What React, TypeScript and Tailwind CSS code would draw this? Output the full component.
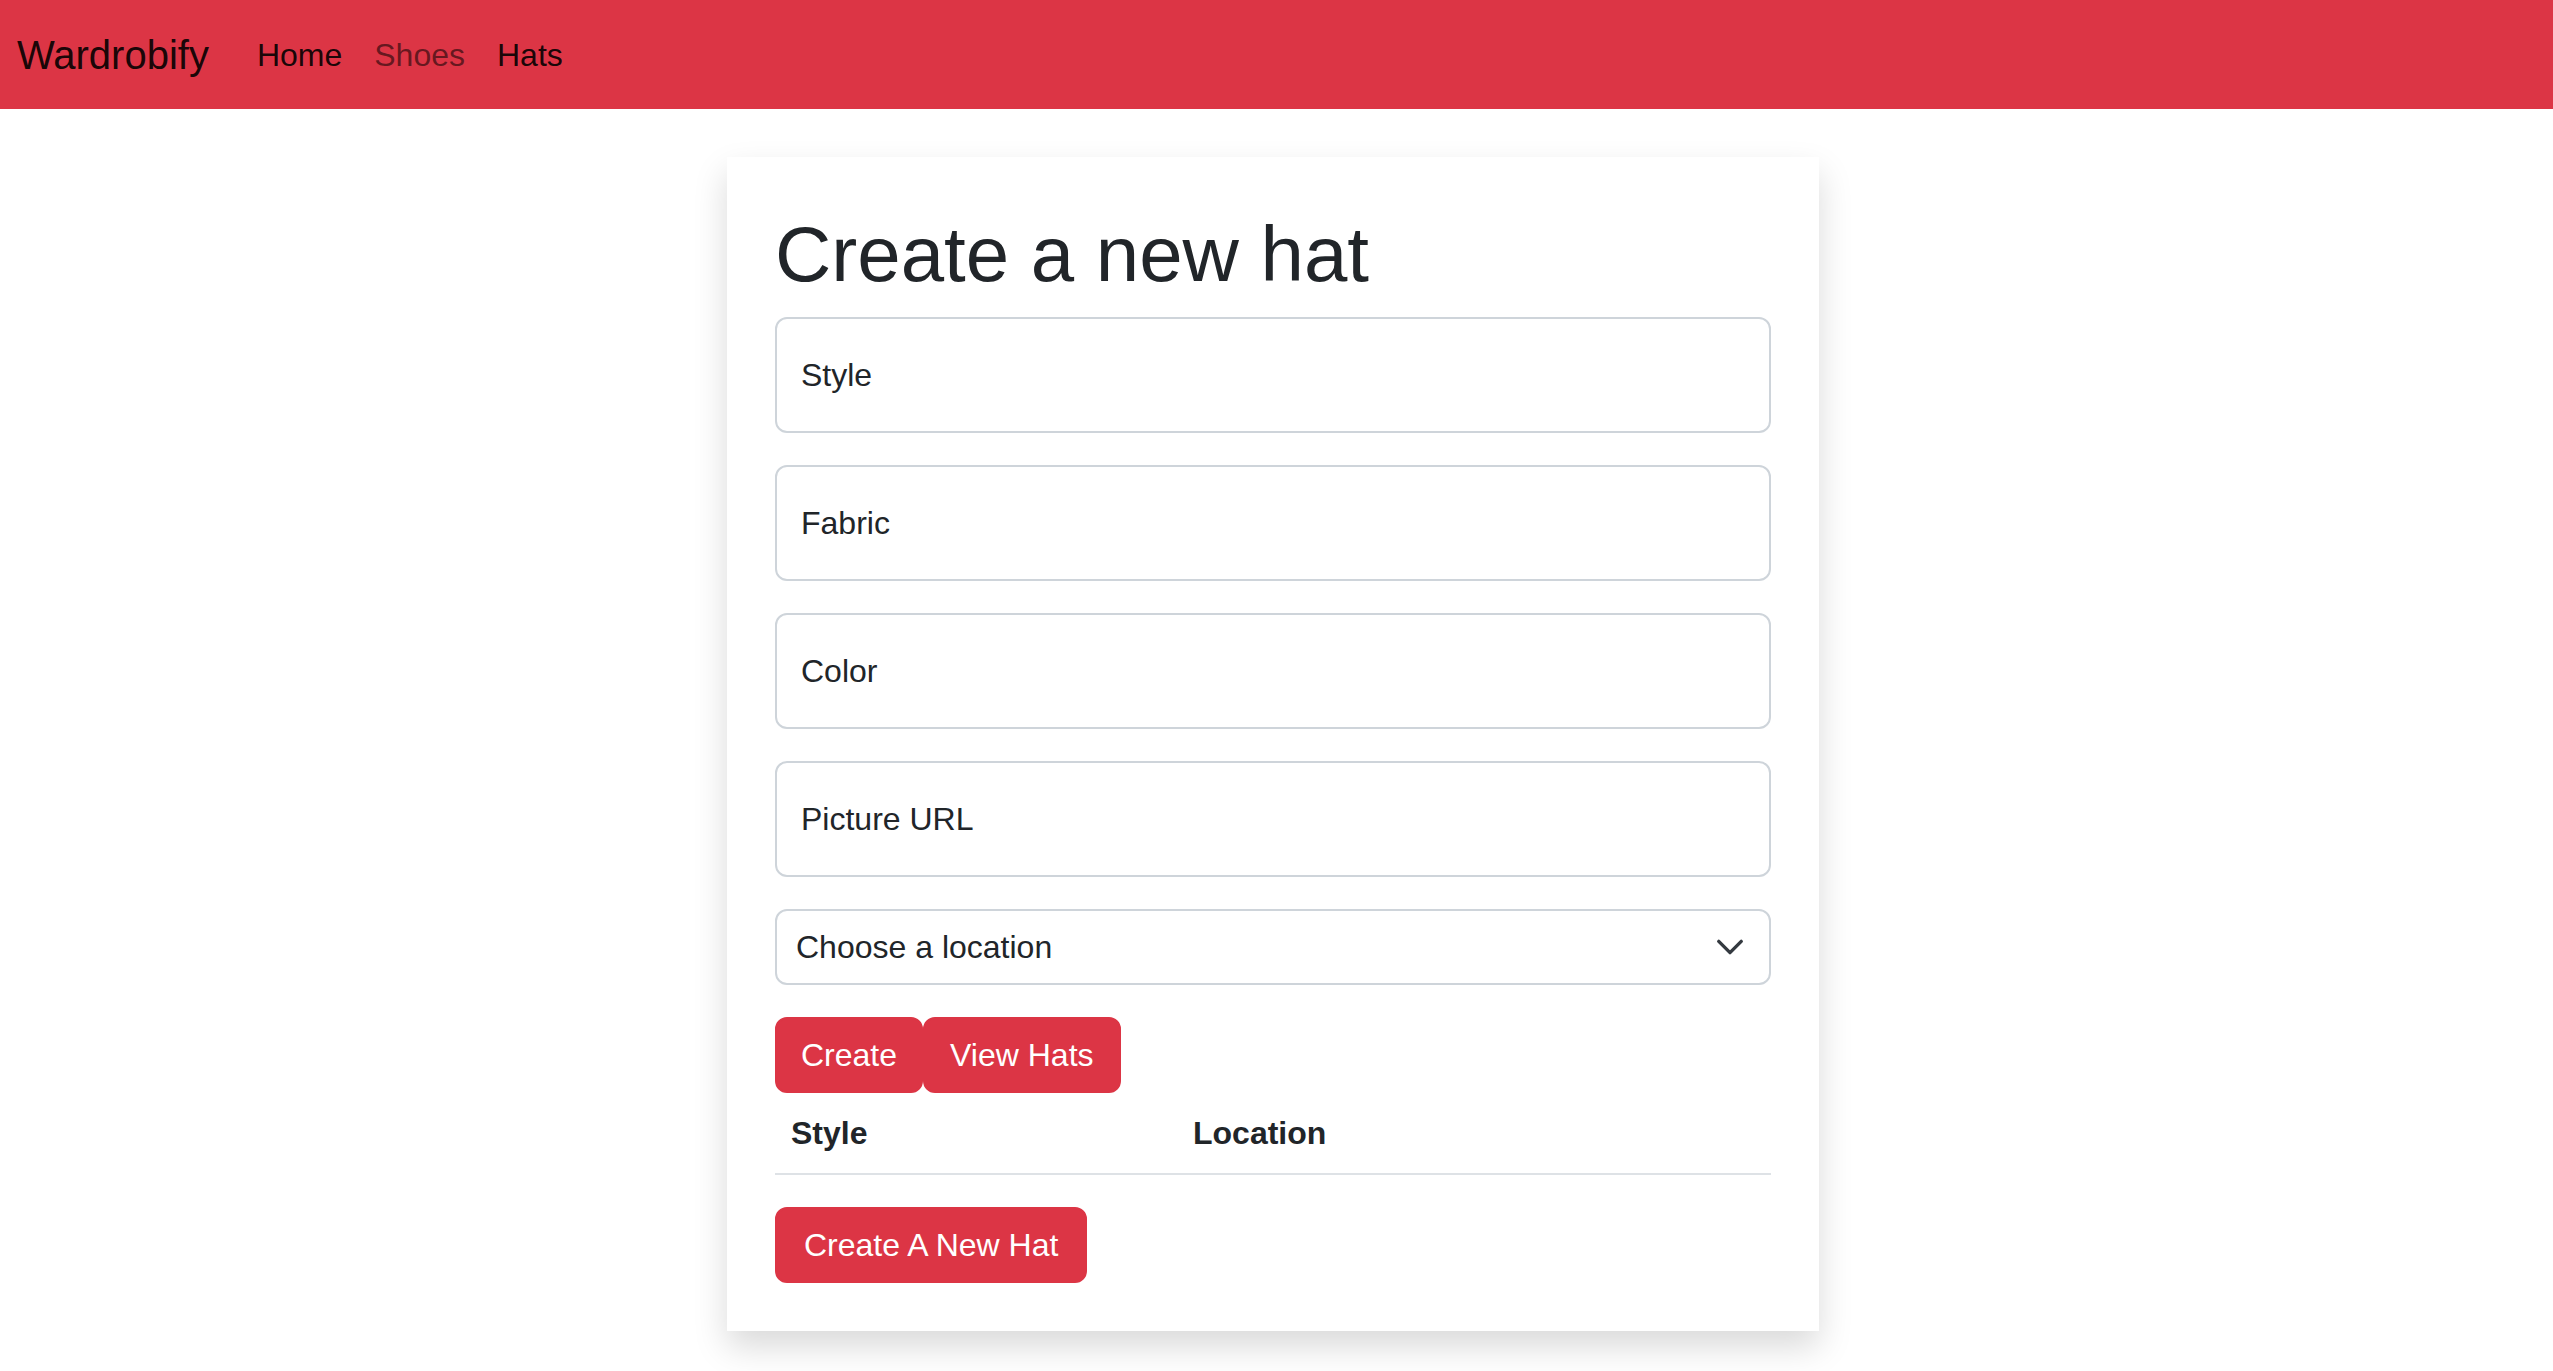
import { useState } from 'react'

const fields = ['Style', 'Fabric', 'Color', 'Picture URL']

export default function App() {
  const [values, setValues] = useState<Record<string, string>>({})
  const [location, setLocation] = useState('')

  return (
    <div className="min-h-screen bg-white font-['Liberation_Sans',Arial,sans-serif] text-[#212529]">
      {/* Navbar */}
      <nav className="flex h-[109px] items-center bg-[#dc3545] pl-[17px]">
        <a href="#" className="mr-8 text-[40px] leading-[60px] text-black/90">
          Wardrobify
        </a>
        <ul className="flex items-center">
          <li>
            <a href="#" className="block px-4 text-[32px] leading-[48px] text-black/90">Home</a>
          </li>
          <li>
            <a href="#" className="block px-4 text-[32px] leading-[48px] text-black/55">Shoes</a>
          </li>
          <li>
            <a href="#" className="block px-4 text-[32px] leading-[48px] text-black/90">Hats</a>
          </li>
        </ul>
      </nav>

      {/* Form card */}
      <div className="ml-[727px] mt-12 mb-12 w-[1092px] bg-white p-12 shadow-[0_16px_32px_rgba(0,0,0,0.15)]">
        <h1 className="mb-4 pt-[3px] text-[78px] font-medium leading-[93px] text-[#212529]">Create a new hat</h1>

        <form onSubmit={(e) => e.preventDefault()}>
          {fields.map((f) => (
            <div key={f} className="mb-8">
              <input
                value={values[f] ?? ''}
                onChange={(e) => setValues({ ...values, [f]: e.target.value })}
                placeholder={f}
                className="block h-[116px] w-full rounded-[12px] border-2 border-[#ced4da] bg-white px-6 text-[32px] text-[#212529] outline-none placeholder:text-[#212529]"
              />
            </div>
          ))}

          <div className="relative mb-8">
            <select
              value={location}
              onChange={(e) => setLocation(e.target.value)}
              className="block h-[76px] w-full appearance-none rounded-[12px] border-2 border-[#ced4da] bg-white pl-[19px] pr-[72px] text-[32px] leading-[48px] text-[#212529] outline-none"
            >
              <option value="">Choose a location</option>
            </select>
            <svg
              className="pointer-events-none absolute right-[26px] top-1/2 -translate-y-1/2"
              width="30"
              height="30"
              viewBox="0 0 16 16"
              fill="none"
              stroke="#343a40"
              strokeWidth="1.8"
              strokeLinecap="round"
              strokeLinejoin="round"
            >
              <path d="m2 5 6 6 6-6" />
            </svg>
          </div>

          <div className="flex">
            <button className="h-[76px] rounded-[12px] border-2 border-[#dc3545] bg-[#dc3545] px-6 text-[32px] leading-[48px] text-white">
              Create
            </button>
            <button type="button" className="h-[76px] rounded-[12px] border-2 border-[#dc3545] bg-[#dc3545] px-[25px] text-[32px] leading-[48px] text-white">
              View Hats
            </button>
          </div>
        </form>

        <table className="mb-8 w-full border-collapse">
          <thead>
            <tr className="border-b-2 border-[#dee2e6]">
              <th className="w-[402px] px-4 py-4 text-left text-[32px] font-bold leading-[48px]">Style</th>
              <th className="px-4 py-4 text-left text-[32px] font-bold leading-[48px]">Location</th>
            </tr>
          </thead>
          <tbody></tbody>
        </table>

        <button className="h-[76px] rounded-[12px] border-2 border-[#dc3545] bg-[#dc3545] px-[27px] text-[32px] leading-[48px] text-white">
          Create A New Hat
        </button>
      </div>
    </div>
  )
}
